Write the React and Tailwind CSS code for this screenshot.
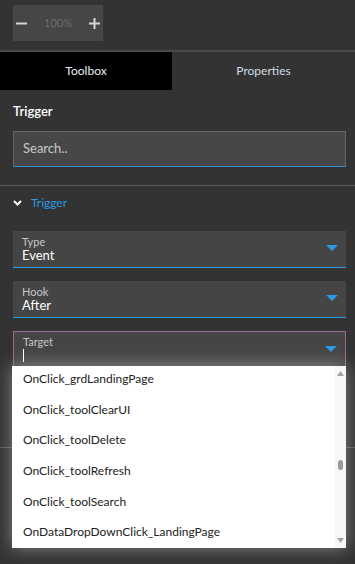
import React from 'react'

const items = [
  'OnClick_grdLandingPage',
  'OnClick_toolClearUI',
  'OnClick_toolDelete',
  'OnClick_toolRefresh',
  'OnClick_toolSearch',
  'OnDataDropDownClick_LandingPage',
]

const Caret = () => (
  <svg width="12" height="7" viewBox="0 0 12 7" className="shrink-0">
    <path d="M0 0h12L6 6z" fill="#2a9be3" />
  </svg>
)

const SelectField = ({ label, value }) => (
  <div className="flex h-[37px] items-center justify-between bg-[#454545] border-b border-[#2a9be3] pl-[9px] pr-[8px]">
    <div className="flex flex-col leading-none">
      <span className="text-[11px] text-[#c8c8c8]">{label}</span>
      <span className="mt-[2px] text-[13px] text-white">{value}</span>
    </div>
    <Caret />
  </div>
)

const App = () => {
  return (
    <div className="relative h-[564px] w-[355px] overflow-hidden bg-[#333333] font-['Lato',sans-serif] text-white">
      {/* Zoom control */}
      <div className="px-[13px] pt-[5px] pb-[9px]">
        <div className="flex h-[36px] w-[90px] items-center justify-between bg-[#464646] px-[3px]">
          <svg width="11" height="11" viewBox="0 0 11 11">
            <path d="M0 5.5h11" stroke="#cfd8e0" strokeWidth="2" />
          </svg>
          <span className="text-[11px] text-[#6c6c6c]">100%</span>
          <svg width="11" height="11" viewBox="0 0 11 11">
            <path d="M0 5.5h11M5.5 0v11" stroke="#cfd8e0" strokeWidth="2" />
          </svg>
        </div>
      </div>
      <div className="h-[2px] bg-[#4a4a4a]" />

      {/* Tabs */}
      <div className="flex h-[38px] text-[12px]">
        <div className="flex w-[172px] items-center justify-center bg-black text-[#e8eef5]">Toolbox</div>
        <div className="flex flex-1 items-center justify-center text-[#d4dde8]">Properties</div>
      </div>

      {/* Toolbox search */}
      <div className="pl-[13px] pr-[9px]">
        <div className="mt-[12px] text-[13px] font-semibold">Trigger</div>
        <div className="mt-[9px] flex h-[36px] items-center border border-[#666] border-b-[#2f8fcc] bg-[#474747] px-[9px] text-[13px] text-[#c9c9c9]">
          Search..
        </div>
      </div>
      <div className="mt-[18px] h-px bg-[#5a5a5a]" />

      {/* Section */}
      <div className="pl-[13px] pr-[9px]">
        <div className="mt-[8px] flex items-center gap-[9px] text-[12px]">
          <svg width="9" height="6" viewBox="0 0 9 6">
            <path d="M1 1l3.5 3.5L8 1" stroke="white" strokeWidth="2" fill="none" />
          </svg>
          <span className="text-[#2a9be3]">Trigger</span>
        </div>

        <div className="mt-[19px] flex flex-col gap-[13px]">
          <SelectField label="Type" value="Event" />
          <SelectField label="Hook" value="After" />
          <div className="flex h-[37px] items-center justify-between border border-[#9c6a96] bg-[#454545] pl-[9px] pr-[8px]">
            <div className="flex flex-col leading-none">
              <span className="text-[11px] text-[#c8c8c8]">Target</span>
              <span className="mt-[2px] h-[13px] w-px bg-white" />
            </div>
            <Caret />
          </div>
        </div>
      </div>

      <div className="mt-[79px] h-px bg-[#5a5a5a]" />

      {/* Dropdown list */}
      <div className="absolute left-[12px] top-[366px] flex h-[182px] w-[334px] bg-white shadow-[0_0_16px_rgba(255,255,255,0.4)]">
        <div className="flex-1 overflow-hidden">
          <div className="-mt-[2px] flex flex-col">
            {items.map((it) => (
              <div key={it} className="flex h-[30.6px] items-center pl-[11px] text-[12px] text-[#222]">
                {it}
              </div>
            ))}
          </div>
        </div>
        <div className="relative w-[11px] bg-[#f7f7f7]">
          <svg className="absolute left-[2px] top-[5px]" width="7" height="5" viewBox="0 0 7 5">
            <path d="M0 5h7L3.5 0z" fill="#a3a3a3" />
          </svg>
          <div className="absolute left-[3px] top-[94px] h-[10px] w-[5px] rounded-full bg-[#9a9a9a]" />
          <svg className="absolute left-[2px] bottom-[5px]" width="7" height="5" viewBox="0 0 7 5">
            <path d="M0 0h7L3.5 5z" fill="#a3a3a3" />
          </svg>
        </div>
      </div>
    </div>
  )
}

export default App
